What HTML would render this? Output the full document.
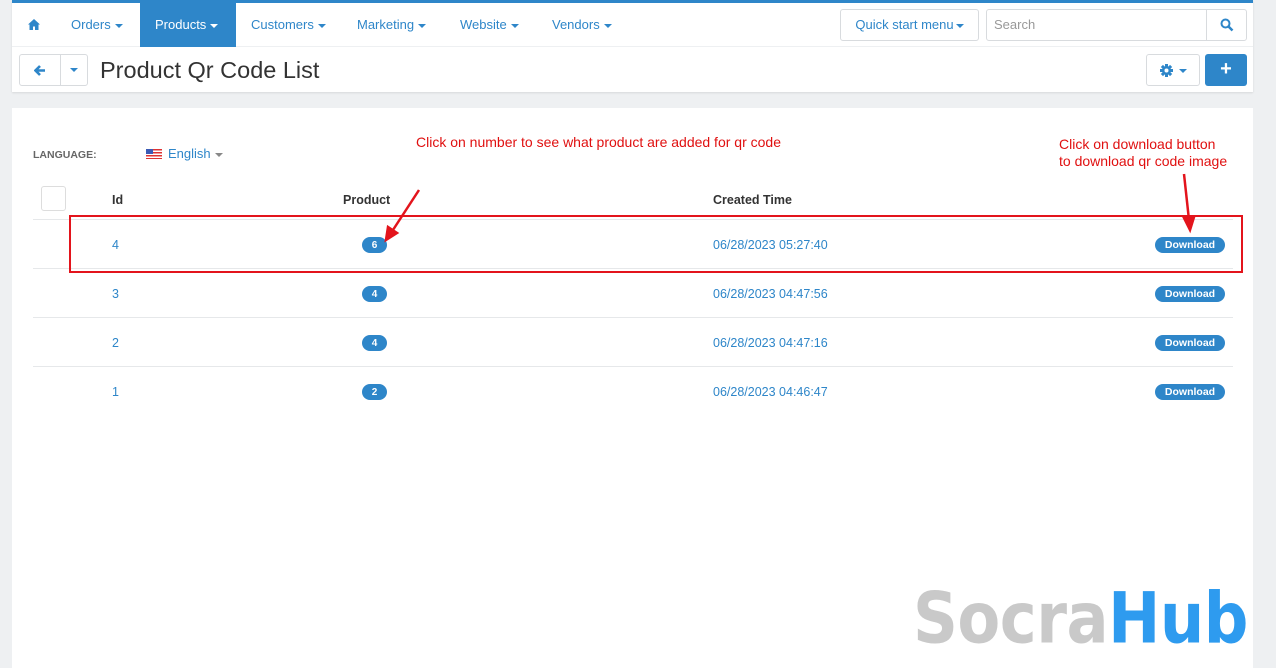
<!DOCTYPE html>
<html><head><meta charset="utf-8"><style>
*{box-sizing:border-box;margin:0;padding:0}
body{width:1276px;height:653px;background:#eef0f2;font-family:"Liberation Sans",sans-serif;position:relative;overflow:hidden;font-size:13px}
.top{position:absolute;left:12px;top:0;width:1241px;height:92px;background:#fff;border-top:3px solid #2e86c9;box-shadow:0 1px 2px rgba(0,0,0,.1)}
.nav{position:absolute;left:0;top:0;height:44px;width:100%;border-bottom:1px solid #eef0f2}
.nav a{position:absolute;top:0;height:44px;line-height:44px;color:#2e86c9;font-size:13px;text-decoration:none}
.car{display:inline-block;width:0;height:0;border-left:4px solid transparent;border-right:4px solid transparent;border-top:4px solid currentColor;vertical-align:middle;margin-left:4px}
.btn{position:absolute;border:1px solid #d8dbde;border-radius:3px;background:#fff}
.main{position:absolute;left:12px;top:108px;width:1241px;height:560px;background:#fff}
.blue{color:#2e86c9}
.red{color:#e01010;font-size:14px;position:absolute}
.row{position:absolute;left:21px;width:1200px;border-top:1px solid #e6e8ea;height:49px}
.cell{position:absolute;top:18px;font-size:12.5px;color:#2e86c9}
.badge{position:absolute;left:329px;top:17px;width:25px;height:16px;border-radius:8px;background:#2e86c9;color:#fff;font-size:10px;font-weight:bold;text-align:center;line-height:17px}
.dl{position:absolute;right:8px;top:17px;width:70px;height:16px;border-radius:8px;background:#2e86c9;color:#fff;font-size:10.5px;font-weight:bold;text-align:center;line-height:16px}
</style></head><body>
<div class="top">
 <div class="nav">
  <a style="left:16px"><svg width="12" height="11" viewBox="0 0 12 11" style="vertical-align:-1px"><path d="M6 0L0 5.5h1.5V11h3.5V7.5h2V11h3.5V5.5H12z" fill="#2e86c9"/></svg></a>
  <a style="left:59px">Orders<span class="car"></span></a>
  <a style="left:128px;width:96px;background:#2e86c9;color:#fff;padding-left:15px">Products<span class="car"></span></a>
  <a style="left:239px">Customers<span class="car"></span></a>
  <a style="left:345px">Marketing<span class="car"></span></a>
  <a style="left:448px">Website<span class="car"></span></a>
  <a style="left:540px">Vendors<span class="car"></span></a>
  <div class="btn" style="left:828px;top:6px;width:139px;height:32px;line-height:30px;text-align:center;color:#2e86c9">Quick start menu<span class="car" style="margin-left:2px"></span></div>
  <div class="btn" style="left:974px;top:6px;width:261px;height:32px;line-height:30px;color:#999;padding-left:7px">Search
   <div style="position:absolute;right:0;top:0;width:40px;height:30px;border-left:1px solid #d8dbde"><svg width="14" height="14" viewBox="0 0 14 14" style="position:absolute;left:13px;top:8px"><circle cx="5.5" cy="5.5" r="4" stroke="#2e86c9" stroke-width="2" fill="none"/><path d="M8.5 8.5L12.5 12.5" stroke="#2e86c9" stroke-width="2.5"/></svg></div></div>
 </div>
 <div class="btn" style="left:7px;top:51px;width:69px;height:32px">
  <div style="position:absolute;left:40px;top:0;height:30px;border-left:1px solid #d8dbde"></div>
  <svg width="12" height="11" viewBox="0 0 12 11" style="position:absolute;left:14px;top:10px"><path d="M6 1L1.5 5.5L6 10M2 5.5H11" stroke="#2e86c9" stroke-width="2.6" fill="none"/></svg>
  <span class="car" style="position:absolute;left:46px;top:13px;color:#2e86c9"></span>
 </div>
 <div style="position:absolute;left:88px;top:54px;font-size:23.5px;color:#333">Product Qr Code List</div>
 <div class="btn" style="left:1134px;top:51px;width:54px;height:32px;color:#2e86c9">
  <svg width="13" height="13" viewBox="0 0 13 13" style="position:absolute;left:13px;top:9px"><g fill="#2e86c9"><circle cx="6.5" cy="6.5" r="4.5"/><rect x="5" y="0" width="3" height="13"/><rect x="0" y="5" width="13" height="3"/><rect x="5" y="0" width="3" height="13" transform="rotate(45 6.5 6.5)"/><rect x="5" y="0" width="3" height="13" transform="rotate(-45 6.5 6.5)"/></g><circle cx="6.5" cy="6.5" r="2" fill="#fff"/></svg>
  <span class="car" style="position:absolute;left:28px;top:14px"></span></div>
 <div style="position:absolute;left:1193px;top:51px;width:42px;height:32px;background:#2e86c9;border-radius:3px;color:#fff;font-size:20px;font-weight:bold;text-align:center;line-height:31px">+</div>
</div>
<div class="main">
 <div style="position:absolute;left:21px;top:41px;font-size:10.5px;font-weight:bold;color:#666">LANGUAGE:</div>
 <div style="position:absolute;left:134px;top:38px;font-size:13px" class="blue"><span style="display:inline-block;width:16px;height:10px;background:repeating-linear-gradient(#d33 0 1.5px,#fff 1.5px 3px);position:relative;vertical-align:-1px;margin-right:6px"><span style="position:absolute;left:0;top:0;width:7px;height:5px;background:#3b5bb5"></span></span>English<span class="car" style="color:#888"></span></div>
 <div class="red" style="left:404px;top:26px">Click on number to see what product are added for qr code</div>
 <div class="red" style="left:1047px;top:28px;line-height:17px">Click on download button<br>to download qr code image</div>
 <div style="position:absolute;left:29px;top:78px;width:25px;height:25px;border:1px solid #ddd;border-radius:3px"></div>
 <div style="position:absolute;left:100px;top:85px;font-weight:bold;font-size:12.5px;color:#333">Id</div>
 <div style="position:absolute;left:331px;top:85px;font-weight:bold;font-size:12.5px;color:#333">Product</div>
 <div style="position:absolute;left:701px;top:85px;font-weight:bold;font-size:12.5px;color:#333">Created Time</div>
 <div class="row" style="top:111px"><div class="cell" style="left:79px">4</div><div class="badge">6</div><div class="cell" style="left:680px">06/28/2023 05:27:40</div><div class="dl">Download</div></div>
 <div class="row" style="top:160px"><div class="cell" style="left:79px">3</div><div class="badge">4</div><div class="cell" style="left:680px">06/28/2023 04:47:56</div><div class="dl">Download</div></div>
 <div class="row" style="top:209px"><div class="cell" style="left:79px">2</div><div class="badge">4</div><div class="cell" style="left:680px">06/28/2023 04:47:16</div><div class="dl">Download</div></div>
 <div class="row" style="top:258px;border-bottom:none"><div class="cell" style="left:79px">1</div><div class="badge">2</div><div class="cell" style="left:680px">06/28/2023 04:46:47</div><div class="dl">Download</div></div>
 <div style="position:absolute;left:57px;top:107px;width:1174px;height:58px;border:2px solid #e3141c"></div>
 <svg style="position:absolute;left:0;top:0" width="1241" height="200"><g stroke="#e3141c" stroke-width="2.5" fill="#e3141c"><path d="M407 82L379 125" fill="none"/><path d="M374 132L376 119L385 125z"/><path d="M1172 66L1177 112" fill="none"/><path d="M1178 122L1172 110L1182 109z"/></g></svg>
</div>
<div style="position:absolute;left:913px;top:574px;font-weight:bold;letter-spacing:-0.5px;transform:scale(0.99,1.12);transform-origin:top left;line-height:80px;color:#c9c9c9;font-family:'DejaVu Sans','Liberation Sans',sans-serif;font-size:63px">Socra<span style="color:#2e9bef">Hub</span></div>
</body></html>
